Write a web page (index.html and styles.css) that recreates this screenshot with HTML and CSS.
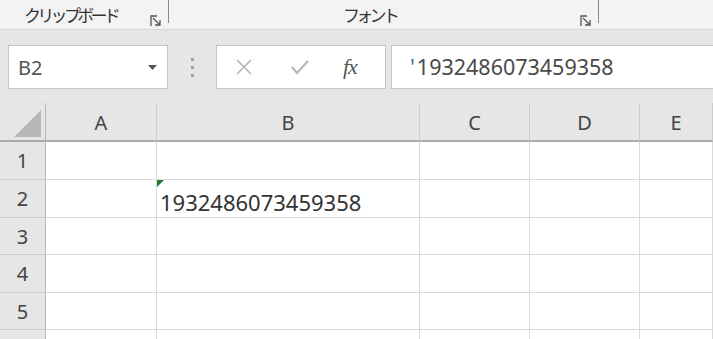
FILE: index.html
```html
<!DOCTYPE html>
<html>

<head>
    <link rel="stylesheet" href="styles.css">
</head>

<body>
    <section class="ribbon">
        <div class="group clip">
            <span class="label">クリップボード</span>
            <span class="launcher"><svg width="12" height="12" viewBox="0 0 12 12">
                    <path d="M1 11V1h6M3 3l7 7M10 5v5H5" fill="none" stroke="#555" stroke-width="1.3"/>
                </svg></span>
        </div>
        <div class="group font">
            <span class="label">フォント</span>
            <span class="launcher"><svg width="12" height="12" viewBox="0 0 12 12">
                    <path d="M1 11V1h6M3 3l7 7M10 5v5H5" fill="none" stroke="#555" stroke-width="1.3"/>
                </svg></span>
        </div>
    </section>

    <section class="formulabar">
        <div class="namebox">
            <span>B2</span>
            <svg class="arrow" width="9" height="5" viewBox="0 0 9 5"><path d="M0 0h9L4.5 5z" fill="#555"/></svg>
        </div>
        <div class="grip"><i></i><i></i><i></i></div>
        <div class="buttons">
            <svg width="18" height="18" viewBox="0 0 18 18"><path d="M2 2l14 14M16 2L2 16" stroke="#b4b4b4" stroke-width="1.6"/></svg>
            <svg width="20" height="18" viewBox="0 0 20 18"><path d="M2 9l5 6L18 3" fill="none" stroke="#b4b4b4" stroke-width="2"/></svg>
            <span class="fx">fx</span>
        </div>
        <div class="input"><span class="quote">'</span>1932486073459358</div>
    </section>

    <section class="sheet">
        <div class="corner"><i></i></div>
        <div class="colhead">A</div>
        <div class="colhead">B</div>
        <div class="colhead">C</div>
        <div class="colhead">D</div>
        <div class="colhead">E</div>

        <div class="rowhead">1</div>
        <div class="cell"></div><div class="cell"></div><div class="cell"></div><div class="cell"></div><div class="cell"></div>

        <div class="rowhead">2</div>
        <div class="cell"></div>
        <div class="cell value"><i class="flag"></i>1932486073459358</div>
        <div class="cell"></div><div class="cell"></div><div class="cell"></div>

        <div class="rowhead">3</div>
        <div class="cell"></div><div class="cell"></div><div class="cell"></div><div class="cell"></div><div class="cell"></div>

        <div class="rowhead">4</div>
        <div class="cell"></div><div class="cell"></div><div class="cell"></div><div class="cell"></div><div class="cell"></div>

        <div class="rowhead">5</div>
        <div class="cell"></div><div class="cell"></div><div class="cell"></div><div class="cell"></div><div class="cell"></div>

        <div class="rowhead"></div>
        <div class="cell"></div><div class="cell"></div><div class="cell"></div><div class="cell"></div><div class="cell"></div>
    </section>
</body>
</html>
```

FILE: styles.css
```css
body {
    margin: 0;
    background: #e6e6e6;
    font-family: "Noto Sans", "Noto Sans CJK JP", sans-serif;
    color: #444;
    overflow: hidden;
}

.ribbon {
    display: flex;
    height: 29px;
    background: #f3f3f3;
    border-bottom: 1px solid #d5d5d5;
}

.group {
    display: flex;
    align-items: flex-start;
    height: 23px;
    box-sizing: border-box;
    border-right: 1px solid #8a8a8a;
}

.group .label {
    font-size: 17px;
    letter-spacing: -3.7px;
    color: #333;
    line-height: 30px;
    margin-top: 1px;
}

.launcher {
    margin-left: auto;
    margin-right: 6px;
    margin-top: 10px;
}

.clip {
    width: 169px;
    padding-left: 24px;
}

.font {
    width: 430px;
    padding-left: 174px;
}

.formulabar {
    display: flex;
    align-items: center;
    height: 73px;
    padding-left: 8px;
    padding-top: 1px;
    box-sizing: border-box;
}

.namebox {
    width: 160px;
    height: 44px;
    box-sizing: border-box;
    background: #fff;
    border: 1px solid #c6c6c6;
    display: flex;
    align-items: center;
    padding: 0 10px 0 9px;
    font-size: 20px;
    color: #555;
}

.namebox .arrow {
    margin-left: auto;
}

.grip {
    width: 48px;
    display: flex;
    flex-direction: column;
    align-items: center;
    gap: 5px;
}

.grip i {
    width: 3px;
    height: 3px;
    background: #a0a0a0;
}

.buttons {
    width: 170px;
    height: 44px;
    box-sizing: border-box;
    background: #fff;
    border: 1px solid #c6c6c6;
    display: flex;
    align-items: center;
    padding-left: 18px;
    gap: 37px;
}

.fx {
    font-family: "Liberation Serif", serif;
    font-style: italic;
    font-size: 22px;
    color: #555;
    margin-left: -4px;
    letter-spacing: -1px;
}

.input {
    flex: 1;
    margin-left: 5px;
    height: 44px;
    box-sizing: border-box;
    background: #fff;
    border: 1px solid #c6c6c6;
    border-right: none;
    padding-left: 18px;
    font-size: 21.5px;
    line-height: 41px;
    color: #4a4a4a;
}

.quote {
    color: #3d6f8e;
    margin-right: 2px;
}

.sheet {
    display: grid;
    grid-template-columns: 46px 111px 263px 110px 110px 1fr;
    grid-template-rows: 39px 38px 38px 37px 38px 37px 38px;
    background: #fff;
}

.corner,
.colhead {
    background: #e6e6e6;
    border-bottom: 2px solid #ababab;
    border-right: 1px solid #cdcdcd;
}

.corner {
    border-right-color: #b8b8b8;
    position: relative;
}

.corner i {
    position: absolute;
    left: 14px;
    top: 7px;
    width: 27px;
    height: 27px;
    background: #b6b6b6;
    clip-path: polygon(100% 0, 100% 100%, 0 100%);
}

.colhead {
    display: flex;
    align-items: center;
    justify-content: center;
    font-size: 20px;
    padding-top: 2px;
}

.rowhead {
    background: #e6e6e6;
    border-right: 1px solid #b8b8b8;
    border-bottom: 1px solid #cdcdcd;
    display: flex;
    align-items: center;
    justify-content: center;
    font-size: 20px;
}

.cell {
    border-right: 1px solid #dadada;
    border-bottom: 1px solid #dadada;
    position: relative;
}

.value {
    font-size: 22px;
    color: #333;
    padding-left: 3px;
    line-height: 44px;
    white-space: nowrap;
    z-index: 1;
}

.flag {
    position: absolute;
    left: 0;
    top: 0;
    width: 7px;
    height: 7px;
    background: #1f7a32;
    clip-path: polygon(0 0, 100% 0, 0 100%);
}
```
